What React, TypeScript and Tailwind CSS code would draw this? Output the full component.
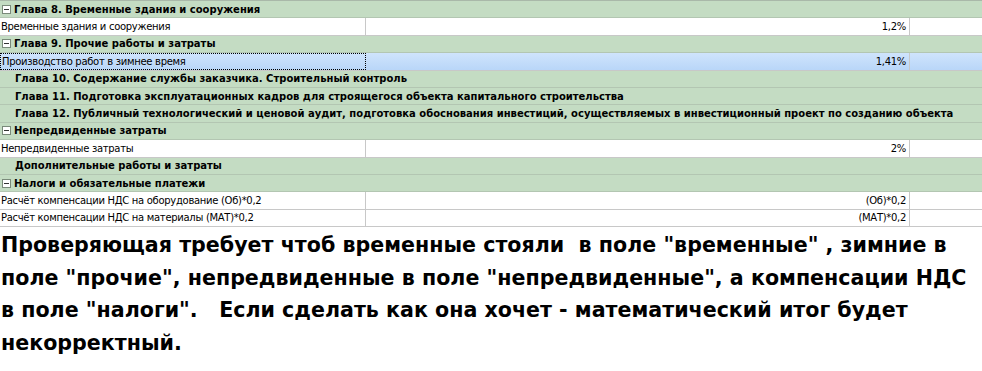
import React from "react"

type Row =
	| { kind: "head"; text: string; icon?: boolean }
	| { kind: "data"; text: string; value: string; selected?: boolean }

const rows: Row[] = [
	{ kind: "head", text: "Глава 8. Временные здания и сооружения", icon: true },
	{ kind: "data", text: "Временные здания и сооружения", value: "1,2%" },
	{ kind: "head", text: "Глава 9. Прочие работы и затраты", icon: true },
	{ kind: "data", text: "Производство работ в зимнее время", value: "1,41%", selected: true },
	{ kind: "head", text: "Глава 10. Содержание службы заказчика. Строительный контроль" },
	{ kind: "head", text: "Глава 11. Подготовка эксплуатационных кадров для строящегося объекта капитального строительства" },
	{
		kind: "head",
		text: "Глава 12. Публичный технологический и ценовой аудит, подготовка обоснования инвестиций, осуществляемых в инвестиционный проект по созданию объекта",
	},
	{ kind: "head", text: "Непредвиденные затраты", icon: true },
	{ kind: "data", text: "Непредвиденные затраты", value: "2%" },
	{ kind: "head", text: "Дополнительные работы и затраты" },
	{ kind: "head", text: "Налоги и обязательные платежи", icon: true },
	{ kind: "data", text: "Расчёт компенсации НДС на оборудование (Об)*0,2", value: "(Об)*0,2" },
	{ kind: "data", text: "Расчёт компенсации НДС на материалы (МАТ)*0,2", value: "(МАТ)*0,2" },
]

function Collapse() {
	return (
		<span className="w-[9px] h-[9px] border border-[#7a8a7a] bg-white flex items-center justify-center mr-[3px] flex-none">
			<span className="w-[5px] h-px bg-[#333]" />
		</span>
	)
}

export default function App() {
	return (
		<div className="w-[982px] h-[371px] bg-white overflow-hidden">
			<div className="border-t border-[#a9b8a9] text-[10px] text-black font-['DejaVu_Sans',sans-serif]">
				{rows.map((r, idx) =>
					r.kind === "head" ? (
						<div
							key={idx}
							className="h-[17.4px] flex items-center bg-[#c4dcc3] border-b border-[#b3c6b2] pl-[2px] font-bold whitespace-nowrap"
						>
							{r.icon ? <Collapse /> : <span className="w-[13px] flex-none" />}
							<span>{r.text}</span>
						</div>
					) : (
						<div
							key={idx}
							className={`h-[17.4px] flex border-b border-[#c8c8c8] tracking-[-0.3px] ${
								r.selected ? "bg-gradient-to-b from-[#cfe4fc] to-[#b9d6f8]" : "bg-white"
							}`}
						>
							<div
								className={`w-[366px] flex-none flex items-center pl-px border-r ${
									r.selected ? "border border-dotted border-black" : "border-[#c8c8c8]"
								}`}
							>
								{r.text}
							</div>
							<div className="w-[544px] flex-none flex items-center justify-end pr-[3px] border-r border-[#c8c8c8]">
								{r.value}
							</div>
							<div className="flex-1" />
						</div>
					)
				)}
			</div>
			<div className="pl-[1px] pt-[2px] text-[20.6px] leading-[32.5px] font-bold text-black font-['DejaVu_Sans',sans-serif] whitespace-pre">
				<div>Проверяющая требует чтоб временные стояли  в поле "временные" , зимние в</div>
				<div>поле "прочие", непредвиденные в поле "непредвиденные", а компенсации НДС</div>
				<div>в поле "налоги".   Если сделать как она хочет - математический итог будет</div>
				<div>некорректный.</div>
			</div>
		</div>
	)
}
